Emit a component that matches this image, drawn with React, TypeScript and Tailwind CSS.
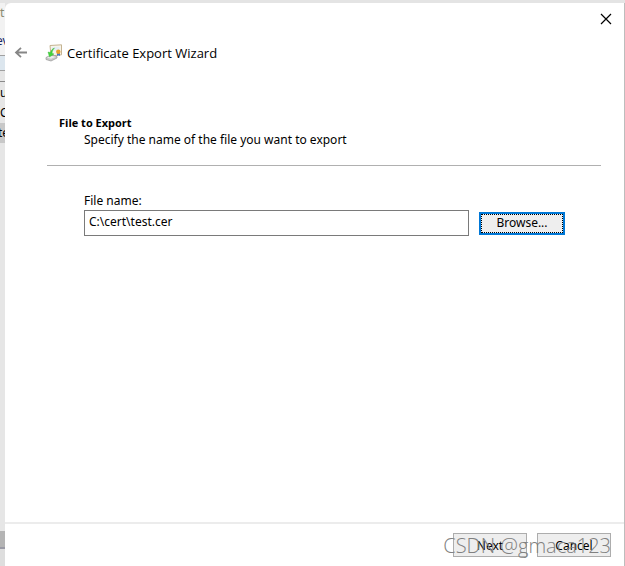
import { useState } from 'react'

function CertificateIcon() {
  return (
    <svg width="18" height="18" viewBox="0 0 18 18" aria-hidden="true" className="shrink-0">
      <path d="M5 1.5 16.5.8v10L6 12z" fill="#f8f4ea" stroke="#c4b391" />
      <path d="M7 3.2 14.5 2.7v3.5L7 7z" fill="#e4edf4" />
      <path d="m12 9 3-.3V12l-1.5-.8L12 12z" fill="#4977c4" />
      <circle cx="13.3" cy="7.8" r="2.2" fill="#e8a02a" />
      <path d="m1 13.5 5-2.5 6 1.5V14l-6 3-5-1.5z" fill="#c9c9c9" stroke="#969696" strokeWidth=".7" />
      <path d="m2 13.5 4-1.8 5 1-5 2z" fill="#ededed" />
      <path d="M9.5 4C7 5 6 6.5 5.5 8.5L3 8l1.5 5L9 10l-2-.8C7.3 7 8 5.5 9.5 4z" fill="#43d33c" stroke="#35b836" strokeWidth=".4" />
    </svg>
  )
}

function WindowBehind() {
  return (
    <div aria-hidden="true" className="w-[5px] shrink-0 flex flex-col overflow-hidden bg-[#e6e6e6] text-xs leading-5 whitespace-nowrap">
      <div className="h-7 bg-[#f2f2f2] text-[#8a8a70]">t</div>
      <div className="h-6 -ml-1 bg-[#f2f2f2] text-[#1b2a66]">ev</div>
      <div className="h-4 border-y border-[#a0a0a0] bg-[#dce6ee]" />
      <div className="h-2.5" />
      <div className="h-5 pt-px border-t border-[#8a8a8a]">u</div>
      <div className="h-[22px] pt-0.5">C</div>
      <div className="h-5 -ml-0.5 bg-[#c8c8c8]">te</div>
      <div className="flex-1" />
      <div className="h-4 bg-[#b4b4b4]" />
      <div className="h-[19px] border-t-2 border-[#9a9aa5] bg-[#dedede]" />
    </div>
  )
}

export default function App() {
  const [fileName, setFileName] = useState('C:\\cert\\test.cer')

  return (
    <div className="min-h-screen flex flex-col bg-[#e4e4e4] pt-[3px] text-xs text-black font-['Noto_Sans',sans-serif]">
      <div className="flex-1 flex">
        <WindowBehind />
        <main className="flex-1 min-w-0 flex flex-col bg-white rounded-tl-md border-r border-[#bdbdbd]">
          <header>
            <div className="h-8 flex items-center justify-end pr-3">
              <button aria-label="Close">
                <svg width="12" height="12" viewBox="0 0 12 12" stroke="#000" strokeWidth="1.2">
                  <path d="m1 1 10 10M11 1 1 11" />
                </svg>
              </button>
            </div>
            <div className="h-9 flex items-center pl-[9px]">
              <button aria-label="Back" className="w-[31px]">
                <svg width="14" height="12" viewBox="0 0 14 12" fill="none" stroke="#868686" strokeWidth="1.8">
                  <path d="M13 5.5H2M7 .8 2 5.5l5 4.7" />
                </svg>
              </button>
              <CertificateIcon />
              <h1 className="pl-1 pt-0.5 text-[13px] font-['Open_Sans',sans-serif]">Certificate Export Wizard</h1>
            </div>
          </header>

          <section className="ml-[42px] mr-[23px] mt-11 pl-3 pb-[17px] border-b border-[#b0b0b0] leading-4">
            <h2 className="text-[11px] font-bold font-['Open_Sans',sans-serif]">File to Export</h2>
            <p className="pl-[25px] pt-px">Specify the name of the file you want to export</p>
          </section>

          <form className="pl-[79px] pr-[59px] pt-[27px]" onSubmit={e => e.preventDefault()}>
            <label htmlFor="file-name" className="block h-[17px] leading-4">File name:</label>
            <div className="flex items-center gap-[10px]">
              <input
                id="file-name"
                value={fileName}
                onChange={e => setFileName(e.target.value)}
                className="flex-1 min-w-0 h-[26px] px-1 pb-1 border border-[#7a7a7a] bg-white outline-none"
              />
              <button type="button" className="w-[86px] h-[23px] border-2 border-[#0078d7] bg-[#eee]">
                <span className="flex h-full items-center justify-center border border-dotted border-black">Browse...</span>
              </button>
            </div>
          </form>

          <footer className="relative mt-auto h-11 flex items-start justify-end gap-[10px] pt-[9px] pr-[13px] border-t-2 border-[#ececec]">
            <button className="w-[74px] h-6 pt-0.5 border border-[#adadad] bg-[#eee]">Next</button>
            <button className="w-[74px] h-6 pt-0.5 border border-[#adadad] bg-[#eee]">Cancel</button>
            <span className="absolute right-[13px] top-2 text-xl leading-7 text-[#808080] font-light whitespace-nowrap pointer-events-none font-['Open_Sans',sans-serif]">CSDN @gmaca123</span>
          </footer>
        </main>
      </div>
    </div>
  )
}
